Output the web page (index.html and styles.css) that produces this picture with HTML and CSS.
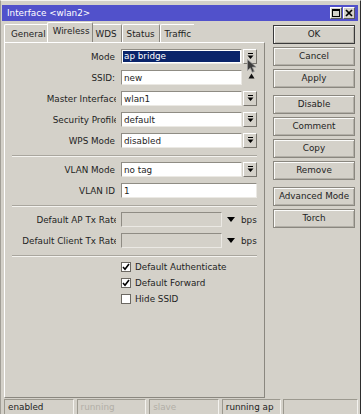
FILE: index.html
```html
<!DOCTYPE html>
<html lang="en">
<head>
    <meta charset="UTF-8">
    <meta name="viewport" content="width=device-width, initial-scale=1.0">
    <title>Interface &lt;wlan2&gt;</title>
    <link rel="stylesheet" href="styles.css">
</head>
<body>

    <div class="window">
        <div class="titlebar">
            <span class="title">Interface &lt;wlan2&gt;</span>
            <div class="title-buttons">
                <span class="tbtn">
                    <svg width="10" height="10" viewBox="0 0 10 10"><path d="M1 1h8v8H1z M2 3v5h6V3z" fill="#000" fill-rule="evenodd"/></svg>
                </span>
                <span class="tbtn">
                    <svg width="10" height="10" viewBox="0 0 10 10"><path d="M2 2l6 6M8 2l-6 6" stroke="#000" stroke-width="1.7"/></svg>
                </span>
            </div>
        </div>

        <div class="main">
            <div class="left">
                <div class="tabs">
                    <span class="tab first">General</span>
                    <span class="tab active">Wireless</span>
                    <span class="tab">WDS</span>
                    <span class="tab">Status</span>
                    <span class="tab">Traffic</span>
                </div>

                <div class="panel">
                    <div class="group">
                        <div class="row">
                            <span class="label">Mode</span>
                            <span class="field"><span class="sel">ap bridge</span></span>
                            <span class="dd"><svg width="7" height="7" viewBox="0 0 7 7"><rect x="1" y="0" width="5" height="1"/><path d="M0.5 2.5h6L3.5 6z"/></svg></span>
                        </div>
                        <div class="row">
                            <span class="label">SSID:</span>
                            <span class="field">new</span>
                        </div>
                        <div class="row">
                            <span class="label cut"><span>Master Interface</span></span>
                            <span class="field">wlan1</span>
                            <span class="dd"><svg width="7" height="7" viewBox="0 0 7 7"><rect x="1" y="0" width="5" height="1"/><path d="M0.5 2.5h6L3.5 6z"/></svg></span>
                        </div>
                        <div class="row">
                            <span class="label cut"><span>Security Profile</span></span>
                            <span class="field">default</span>
                            <span class="dd"><svg width="7" height="7" viewBox="0 0 7 7"><rect x="1" y="0" width="5" height="1"/><path d="M0.5 2.5h6L3.5 6z"/></svg></span>
                        </div>
                        <div class="row">
                            <span class="label">WPS Mode</span>
                            <span class="field">disabled</span>
                            <span class="dd"><svg width="7" height="7" viewBox="0 0 7 7"><rect x="1" y="0" width="5" height="1"/><path d="M0.5 2.5h6L3.5 6z"/></svg></span>
                        </div>
                    </div>

                    <div class="sep"></div>

                    <div class="group">
                        <div class="row">
                            <span class="label">VLAN Mode</span>
                            <span class="field">no tag</span>
                            <span class="dd"><svg width="7" height="7" viewBox="0 0 7 7"><rect x="1" y="0" width="5" height="1"/><path d="M0.5 2.5h6L3.5 6z"/></svg></span>
                        </div>
                        <div class="row">
                            <span class="label">VLAN ID</span>
                            <span class="field wide">1</span>
                        </div>
                    </div>

                    <div class="sep"></div>

                    <div class="group">
                        <div class="row">
                            <span class="label cut"><span>Default AP Tx Rate</span></span>
                            <span class="field rate"></span>
                            <svg class="arrow" width="8" height="5" viewBox="0 0 8 5"><path d="M0 0h8L4 5z"/></svg>
                            <span class="unit">bps</span>
                        </div>
                        <div class="row">
                            <span class="label cut"><span>Default Client Tx Rate</span></span>
                            <span class="field rate"></span>
                            <svg class="arrow" width="8" height="5" viewBox="0 0 8 5"><path d="M0 0h8L4 5z"/></svg>
                            <span class="unit">bps</span>
                        </div>
                    </div>

                    <div class="sep"></div>

                    <div class="checks">
                        <label class="check">
                            <span class="box"><svg width="8" height="8" viewBox="0 0 8 8"><path d="M1 4l2 2.2L7 1" fill="none" stroke="#000" stroke-width="1.6"/></svg></span>
                            Default Authenticate
                        </label>
                        <label class="check">
                            <span class="box"><svg width="8" height="8" viewBox="0 0 8 8"><path d="M1 4l2 2.2L7 1" fill="none" stroke="#000" stroke-width="1.6"/></svg></span>
                            Default Forward
                        </label>
                        <label class="check">
                            <span class="box"></span>
                            Hide SSID
                        </label>
                    </div>
                </div>
            </div>

            <div class="buttons">
                <div class="btn default">OK</div>
                <div class="btn">Cancel</div>
                <div class="btn">Apply</div>
                <div class="btn space">Disable</div>
                <div class="btn">Comment</div>
                <div class="btn">Copy</div>
                <div class="btn">Remove</div>
                <div class="btn space">Advanced Mode</div>
                <div class="btn">Torch</div>
            </div>
        </div>

        <div class="statusbar">
            <span class="cell">enabled</span>
            <span class="cell off">running</span>
            <span class="cell off">slave</span>
            <span class="cell short">running ap</span>
            <span class="cell last"></span>
        </div>

        <!-- mouse pointer over the Mode drop-down -->
        <svg class="cursor" width="12" height="21" viewBox="0 0 12 21">
            <path d="M0.5 0.5v11l2.8-2.6 2 4.4 2-0.9-2-4.3h3.8z" fill="#3c3c3c" stroke="#9a9a9a" stroke-width="0.8"/>
            <path d="M1.5 19.5l3-5 3 5z" fill="#111"/>
        </svg>
    </div>

</body>
</html>
```

FILE: styles.css
```css
* {
    box-sizing: border-box;
}

body {
    margin: 0;
    background-color: #d4d1c9;
    font-family: "DejaVu Sans", sans-serif;
    font-size: 8.8px;
    color: #1e1e1e;
}

.window {
    position: relative;
    width: 361px;
    height: 414px;
    overflow: hidden;
    padding: 4px 2px 0 1px;
    border-top: 1px solid #f4f3ef;
    border-left: 1px solid #a19e96;
    border-right: 1px solid #2e2e2e;
}

.titlebar {
    display: flex;
    align-items: center;
    justify-content: space-between;
    height: 16px;
    padding-left: 5px;
    background-color: #5151cb;
    color: #fff;
}

.title-buttons {
    display: flex;
    gap: 1px;
    margin-right: 3px;
}

.tbtn {
    display: flex;
    align-items: center;
    justify-content: center;
    width: 12px;
    height: 12px;
    background-color: #d4d1c9;
    border: 1px solid;
    border-color: #fff #5a5a5a #5a5a5a #fff;
}

.main {
    display: flex;
    height: 376px;
    margin-top: 1px;
}

.left {
    display: flex;
    flex-direction: column;
    width: 261px;
    margin-left: 2px;
}

.tabs {
    display: flex;
    align-items: flex-end;
    height: 20px;
    width: 190px;
    overflow: hidden;
}

.tab {
    height: 18px;
    padding: 4px 4px 0 4px;
    border-top: 1px solid #fff;
    border-left: 1px solid #fff;
    border-right: 1px solid #8a877f;
    border-radius: 2px 2px 0 0;
    white-space: nowrap;
}

.tab.first {
    padding: 4px 3px 0 6px;
}

.tab.active {
    height: 21px;
    margin: 0 -3px -1px -3px;
    padding: 3px 3px 0 5px;
    background-color: #d4d1c9;
    z-index: 1;
}

.panel {
    flex: 1;
    padding-top: 6px;
    border: 1px solid;
    border-color: #fff #8a877f #8a877f #fff;
}

.group {
    display: flex;
    flex-direction: column;
    gap: 6px;
}

.row {
    display: flex;
    align-items: center;
    height: 15px;
}

.label {
    width: 111px;
    padding-right: 1px;
    text-align: right;
    white-space: nowrap;
    overflow: hidden;
}

.label.cut span {
    display: inline-block;
    margin-right: -4px;
}

.field {
    display: flex;
    align-items: center;
    width: 121px;
    height: 15px;
    margin-left: 5px;
    padding: 1px 1px 1px 2px;
    background-color: #fff;
    border: 1px solid;
    border-color: #8f8c84 #ebe9e4 #ebe9e4 #8f8c84;
    white-space: nowrap;
}

.field.wide {
    width: 136px;
}

.field.rate {
    width: 101px;
    background-color: transparent;
}

.sel {
    flex: 1;
    height: 11px;
    margin-left: -1px;
    padding-left: 1px;
    line-height: 11px;
    background-color: #0a246a;
    color: #fff;
}

.dd {
    display: flex;
    align-items: center;
    justify-content: center;
    width: 14px;
    height: 15px;
    margin-left: 1px;
    border: 1px solid;
    border-color: #fff #77746d #77746d #fff;
}

.arrow {
    margin-left: 5px;
}

.unit {
    margin-left: 6px;
}

.sep {
    height: 2px;
    margin: 7px 7px 5px 7px;
    border-top: 1px solid #a9a69e;
    border-bottom: 1px solid #f4f3ef;
}

.checks {
    display: flex;
    flex-direction: column;
    gap: 6px;
    margin-top: 2px;
    padding-left: 116px;
}

.check {
    display: flex;
    align-items: center;
    gap: 4px;
    height: 10px;
}

.box {
    display: flex;
    align-items: center;
    justify-content: center;
    width: 10px;
    height: 10px;
    background-color: #fff;
    border: 1px solid #6b6862;
}

.buttons {
    display: flex;
    flex-direction: column;
    gap: 3px;
    width: 82px;
    margin-left: 8px;
    padding-top: 3px;
}

.btn {
    height: 19px;
    line-height: 17px;
    text-align: center;
    border: 1px solid #8a877f;
    box-shadow: inset 1px 1px 0 #fbfbf9, inset -1px -1px 0 #b3b0a8;
    white-space: nowrap;
}

.btn.default {
    border-color: #3a3a3a;
}

.btn.space {
    margin-top: 4px;
}

.statusbar {
    display: flex;
    gap: 3px;
    margin-top: 1px;
    margin-left: 2px;
}

.cell {
    width: 70px;
    height: 17px;
    padding-left: 3px;
    line-height: 15px;
    border: 1px solid;
    border-color: #9c998f #f4f3ef #f4f3ef #9c998f;
    white-space: nowrap;
    overflow: hidden;
}

.cell.off {
    color: #b2afa7;
}

.cell.short {
    width: 60px;
    margin-right: -1px;
}

.cell.last {
    width: 75px;
}

.cursor {
    position: absolute;
    left: 246px;
    top: 58px;
}
```
